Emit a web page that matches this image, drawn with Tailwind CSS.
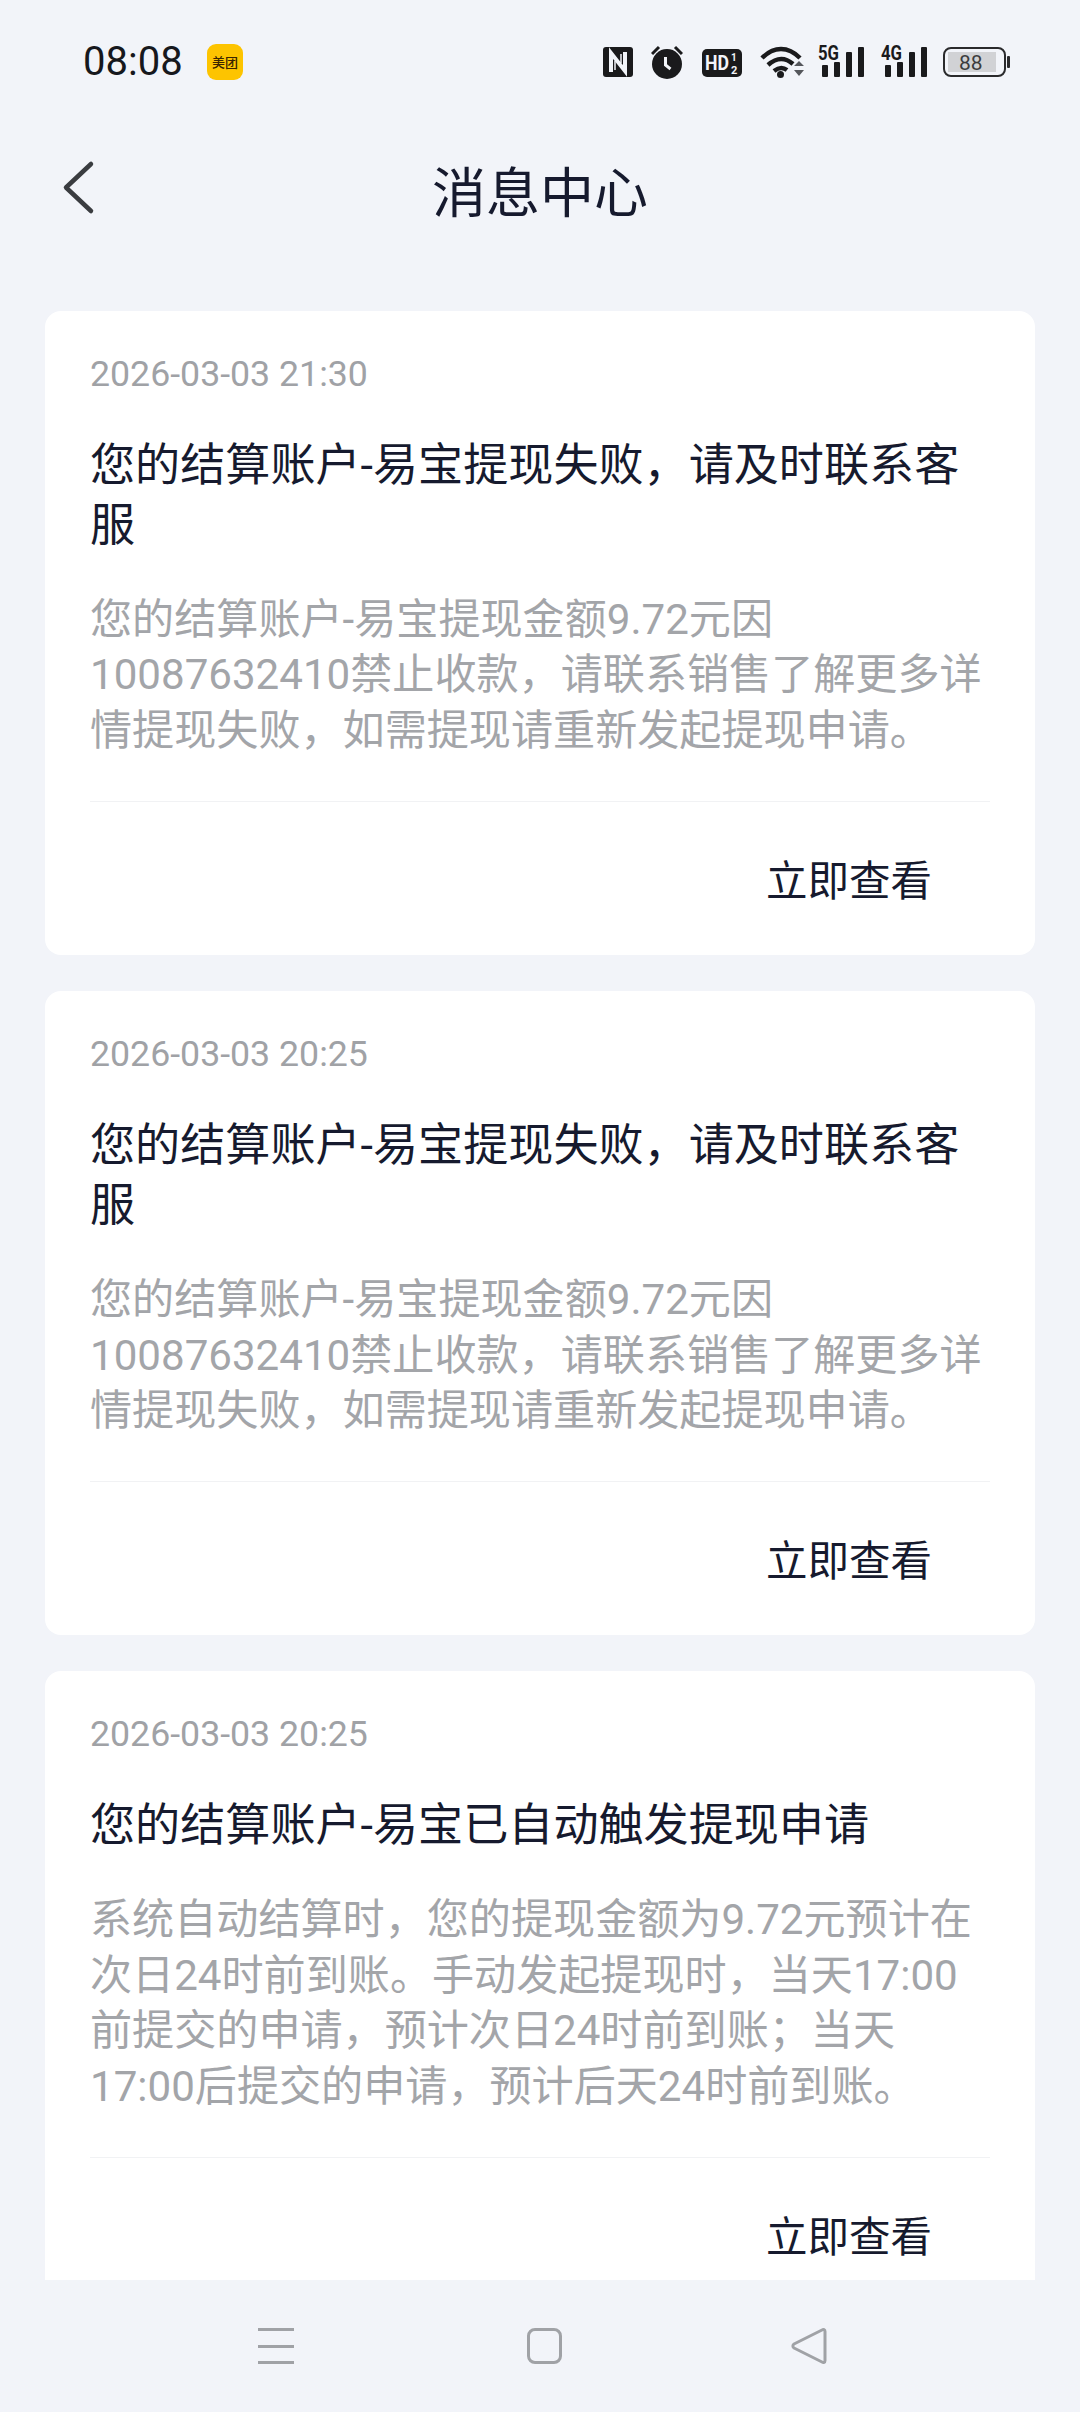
<!DOCTYPE html>
<html lang="zh-CN">
<head>
<meta charset="utf-8">
<script src="https://cdn.jsdelivr.net/npm/@tailwindcss/browser@4"></script>
</head>
<body class="m-0">
<div class="w-[1080px] h-[2412px] flex flex-col overflow-hidden bg-[#f2f4f9] text-[#161a2e] font-['Roboto','Noto_Sans_CJK_SC',sans-serif]">
  <!-- status bar -->
  <div class="h-[124px] shrink-0 flex items-center pl-[83px] relative">
    <span class="text-[40px] leading-none text-[#16181d] w-[124px]">08:08</span>
    <div class="w-[36px] h-[36px] rounded-[9px] bg-[#fdc400] flex items-center justify-center text-[13px] leading-none text-[#3a2500] font-medium">美团</div>
    <div class="ml-auto mr-[70px] flex items-center h-[40px]">
      <svg class="mr-[18px]" width="30" height="30" viewBox="0 0 30 30"><rect width="30" height="30" rx="3" fill="#1a1a1c"/><path d="M8 25V6l7 9M22 5v19l-7-9" fill="none" stroke="#f2f4f9" stroke-width="4"/><path d="M12 14v9M18 7v9" fill="none" stroke="#f2f4f9" stroke-width="1.500"/></svg>
      <svg class="mr-[19px]" width="32" height="34" viewBox="0 0 32 34"><circle cx="16" cy="19" r="15" fill="#1a1a1c"/><path d="M1 9l7-7M31 9l-7-7" stroke="#1a1a1c" stroke-width="3"/><path d="M14.500 12v8l5 4" fill="none" stroke="#f2f4f9" stroke-width="3"/></svg>
      <svg class="mr-[18px] mt-[2px]" width="40" height="28" viewBox="0 0 40 28"><rect width="40" height="28" rx="5" fill="#1a1a1c"/><text x="3" y="21" font-family="Roboto" font-size="20" font-weight="700" fill="#f2f4f9" textLength="24" lengthAdjust="spacingAndGlyphs">HD</text><text x="29" y="12" font-family="Roboto" font-size="10" font-weight="700" fill="#f2f4f9">1</text><text x="29" y="25" font-family="Roboto" font-size="11" font-weight="700" fill="#f2f4f9">2</text></svg>
      <svg class="mr-[14px] mb-[2px]" width="44" height="33" viewBox="0 0 44 33"><path d="M2 13C14 1 28 1 40 13" fill="none" stroke="#1a1a1c" stroke-width="4.500"/><path d="M8 20c9-8 17-8 25-1" fill="none" stroke="#1a1a1c" stroke-width="4.500"/><path d="M14 26c5-4 9-4 13-1" fill="none" stroke="#1a1a1c" stroke-width="4.500"/><circle cx="20.500" cy="29.500" r="3.500" fill="#1a1a1c"/><path d="M34 21l5-5 5 5zM34 25l5 6 5-6z" fill="#55575c"/></svg>
      <svg class="mr-[17px] mb-[8px]" width="46" height="38" viewBox="0 -6 46 38"><text x="0" y="14.500" font-family="Roboto" font-size="20" font-weight="700" fill="#1a1a1c" textLength="21" lengthAdjust="spacingAndGlyphs">5G</text><rect x="4" y="20" width="6" height="12" rx="1" fill="#1a1a1c"/><rect x="16" y="17" width="6" height="15" rx="1" fill="#1a1a1c"/><rect x="28" y="7" width="6" height="25" rx="1" fill="#1a1a1c"/><rect x="40" y="2" width="6" height="30" rx="1" fill="#1a1a1c"/></svg>
      <svg class="mr-[16px] mb-[8px]" width="46" height="38" viewBox="0 -6 46 38"><text x="0" y="14.500" font-family="Roboto" font-size="20" font-weight="700" fill="#1a1a1c" textLength="21" lengthAdjust="spacingAndGlyphs">4G</text><rect x="4" y="20" width="6" height="12" rx="1" fill="#1a1a1c"/><rect x="16" y="17" width="6" height="15" rx="1" fill="#1a1a1c"/><rect x="28" y="7" width="6" height="25" rx="1" fill="#1a1a1c"/><rect x="40" y="2" width="6" height="30" rx="1" fill="#1a1a1c"/></svg>
      <svg width="67" height="30" viewBox="0 0 67 30"><rect x="1" y="1" width="61" height="28" rx="7" fill="none" stroke="#2a2a2c" stroke-width="2"/><rect x="5" y="5" width="48" height="20" fill="#d1d2d5"/><text x="16" y="22.500" font-family="Roboto" font-size="21" fill="#3c3d40">88</text><rect x="64" y="9" width="3" height="12" rx="1" fill="#2a2a2c"/></svg>
    </div>
  </div>
  <!-- header -->
  <div class="h-[136px] shrink-0 relative flex items-center justify-center pt-[5px]">
    <svg class="absolute left-[58px] top-[34px]" width="38" height="58" viewBox="0 0 38 58"><path d="M33 6L8 29.500l25 23.500" fill="none" stroke="#3a3c40" stroke-width="4.500" stroke-linecap="round" stroke-linejoin="round"/></svg>
    <span class="text-[54px] leading-none">消息中心</span>
  </div>
  <!-- list -->
  <div class="h-[2020px] shrink-0 overflow-hidden pt-[51px] px-[45px] flex flex-col gap-[36px]">
    <div class="bg-white rounded-[16px] px-[45px] pt-[41px] shrink-0">
      <div class="text-[35.7px] leading-[44px] text-[#a0a2a6]">2026-03-03 21:30</div>
      <div class="mt-[40px] text-[45.1px] leading-[60px]">您的结算账户-易宝提现失败，请及时联系客服</div>
      <div class="mt-[36px] text-[42.1px] leading-[55.4px] text-[#a3a5a9]">您的结算账户-易宝提现金额9.72元因10087632410禁止收款，请联系销售了解更多详情提现失败，如需提现请重新发起提现申请。</div>
      <div class="mt-[43px] h-[1px] bg-[#f1f2f4]"></div>
      <div class="h-[153px] flex items-center justify-end pr-[58px] pt-[6px]"><span class="text-[41.5px] leading-none">立即查看</span></div>
    </div>
    <div class="bg-white rounded-[16px] px-[45px] pt-[41px] shrink-0">
      <div class="text-[35.7px] leading-[44px] text-[#a0a2a6]">2026-03-03 20:25</div>
      <div class="mt-[40px] text-[45.1px] leading-[60px]">您的结算账户-易宝提现失败，请及时联系客服</div>
      <div class="mt-[36px] text-[42.1px] leading-[55.4px] text-[#a3a5a9]">您的结算账户-易宝提现金额9.72元因10087632410禁止收款，请联系销售了解更多详情提现失败，如需提现请重新发起提现申请。</div>
      <div class="mt-[43px] h-[1px] bg-[#f1f2f4]"></div>
      <div class="h-[153px] flex items-center justify-end pr-[58px] pt-[6px]"><span class="text-[41.5px] leading-none">立即查看</span></div>
    </div>
    <div class="bg-white rounded-[16px] px-[45px] pt-[41px] shrink-0">
      <div class="text-[35.7px] leading-[44px] text-[#a0a2a6]">2026-03-03 20:25</div>
      <div class="mt-[40px] text-[45.1px] leading-[60px]">您的结算账户-易宝已自动触发提现申请</div>
      <div class="mt-[36px] text-[42.1px] leading-[55.4px] text-[#a3a5a9]">系统自动结算时，您的提现金额为9.72元预计在次日24时前到账。手动发起提现时，当天17:00前提交的申请，预计次日24时前到账；当天17:00后提交的申请，预计后天24时前到账。</div>
      <div class="mt-[43px] h-[1px] bg-[#f1f2f4]"></div>
      <div class="h-[153px] flex items-center justify-end pr-[58px] pt-[6px]"><span class="text-[41.5px] leading-none">立即查看</span></div>
    </div>
  </div>
  <!-- nav -->
  <div class="flex-1 relative">
    <div class="absolute left-[258px] top-[48px] w-[36px] h-[36px] flex flex-col justify-between">
      <div class="h-[3px] bg-[#a0a2a6]"></div><div class="h-[3px] bg-[#a0a2a6]"></div><div class="h-[3px] bg-[#a0a2a6]"></div>
    </div>
    <div class="absolute left-[527px] top-[48px] w-[35px] h-[36px] rounded-[8px] border-[3px] border-[#a0a2a6]"></div>
    <svg class="absolute left-[790px] top-[47px]" width="38" height="38" viewBox="0 0 38 38"><path d="M35 4.500c0-2-1.500-2.500-3-1.500L4 17c-1.500 1-1.500 3 0 4l28 14c1.500 1 3 .5 3-1.500z" fill="none" stroke="#a0a2a6" stroke-width="3" stroke-linejoin="round"/></svg>
  </div>
</div>
</body>
</html>
